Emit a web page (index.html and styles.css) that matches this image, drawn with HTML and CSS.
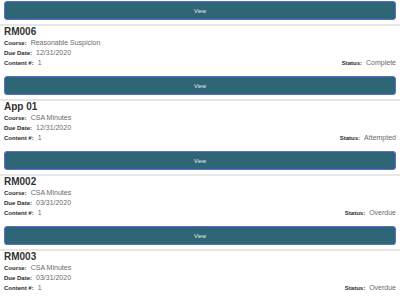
FILE: index.html
```html
<!DOCTYPE html>
<html lang="en">
<head>
    <meta charset="UTF-8" />
    <meta name="viewport" content="width=device-width, initial-scale=1.0">
    <title>Assignments</title>
    <link rel="stylesheet" href="styles.css">
</head>
<body>
    <div class="assignment-list">
        <!-- tail of the previous entry -->
        <div class="assignment first">
            <button class="view-btn">View</button>
        </div>

        <div class="assignment">
            <h3>RM006</h3>
            <div class="row"><span class="label">Course:</span><span class="value">Reasonable Suspicion</span></div>
            <div class="row"><span class="label">Due Date:</span><span class="value">12/31/2020</span></div>
            <div class="row split">
                <div><span class="label">Content #:</span><span class="value">1</span></div>
                <div><span class="label">Status:</span><span class="value">Complete</span></div>
            </div>
            <button class="view-btn">View</button>
        </div>

        <div class="assignment">
            <h3>App 01</h3>
            <div class="row"><span class="label">Course:</span><span class="value">CSA Minutes</span></div>
            <div class="row"><span class="label">Due Date:</span><span class="value">12/31/2020</span></div>
            <div class="row split">
                <div><span class="label">Content #:</span><span class="value">1</span></div>
                <div><span class="label">Status:</span><span class="value">Attempted</span></div>
            </div>
            <button class="view-btn">View</button>
        </div>

        <div class="assignment">
            <h3>RM002</h3>
            <div class="row"><span class="label">Course:</span><span class="value">CSA Minutes</span></div>
            <div class="row"><span class="label">Due Date:</span><span class="value">03/31/2020</span></div>
            <div class="row split">
                <div><span class="label">Content #:</span><span class="value">1</span></div>
                <div><span class="label">Status:</span><span class="value">Overdue</span></div>
            </div>
            <button class="view-btn">View</button>
        </div>

        <div class="assignment last">
            <h3>RM003</h3>
            <div class="row"><span class="label">Course:</span><span class="value">CSA Minutes</span></div>
            <div class="row"><span class="label">Due Date:</span><span class="value">03/31/2020</span></div>
            <div class="row split">
                <div><span class="label">Content #:</span><span class="value">1</span></div>
                <div><span class="label">Status:</span><span class="value">Overdue</span></div>
            </div>
        </div>
    </div>
</body>
</html>
```

FILE: styles.css
```css
:root {
    --btn-color: #2f6676;
    --btn-border: #5c6bd6;
    --text-color: #2a2a2a;
    --text-muted-color: #6a6a6a;
    --divider-color: #e6e6e6;
}

* {
    margin: 0;
    padding: 0;
    box-sizing: border-box;
}

body {
    font-family: "Liberation Sans", Arial, sans-serif;
    background-color: #ffffff;
    color: var(--text-color);
    overflow: hidden;
}

.assignment-list {
    display: flex;
    flex-direction: column;
    padding-top: 1px;
}

.assignment {
    display: flex;
    flex-direction: column;
    padding: 0 4px;
    border-bottom: 2px solid var(--divider-color);
}

.assignment.first {
    padding-bottom: 4px;
}

.assignment.last {
    border-bottom: none;
}

.assignment h3 {
    font-size: 10px;
    font-weight: 700;
    line-height: 12px;
    color: #333333;
}

.row {
    display: flex;
    align-items: center;
    height: 10px;
    font-size: 7px;
    line-height: 10px;
}

.row.split {
    justify-content: space-between;
}

.label {
    font-size: 6px;
    font-weight: 700;
    color: var(--text-color);
    margin-right: 4px;
}

.value {
    color: var(--text-muted-color);
}

.view-btn {
    margin-top: 8px;
    margin-bottom: 4px;
    height: 19px;
    width: 100%;
    background-color: var(--btn-color);
    color: #e8eef0;
    border: 1px solid var(--btn-border);
    border-radius: 3px;
    font-family: inherit;
    font-size: 5.5px;
}

.assignment.first .view-btn {
    margin: 0;
}
```
